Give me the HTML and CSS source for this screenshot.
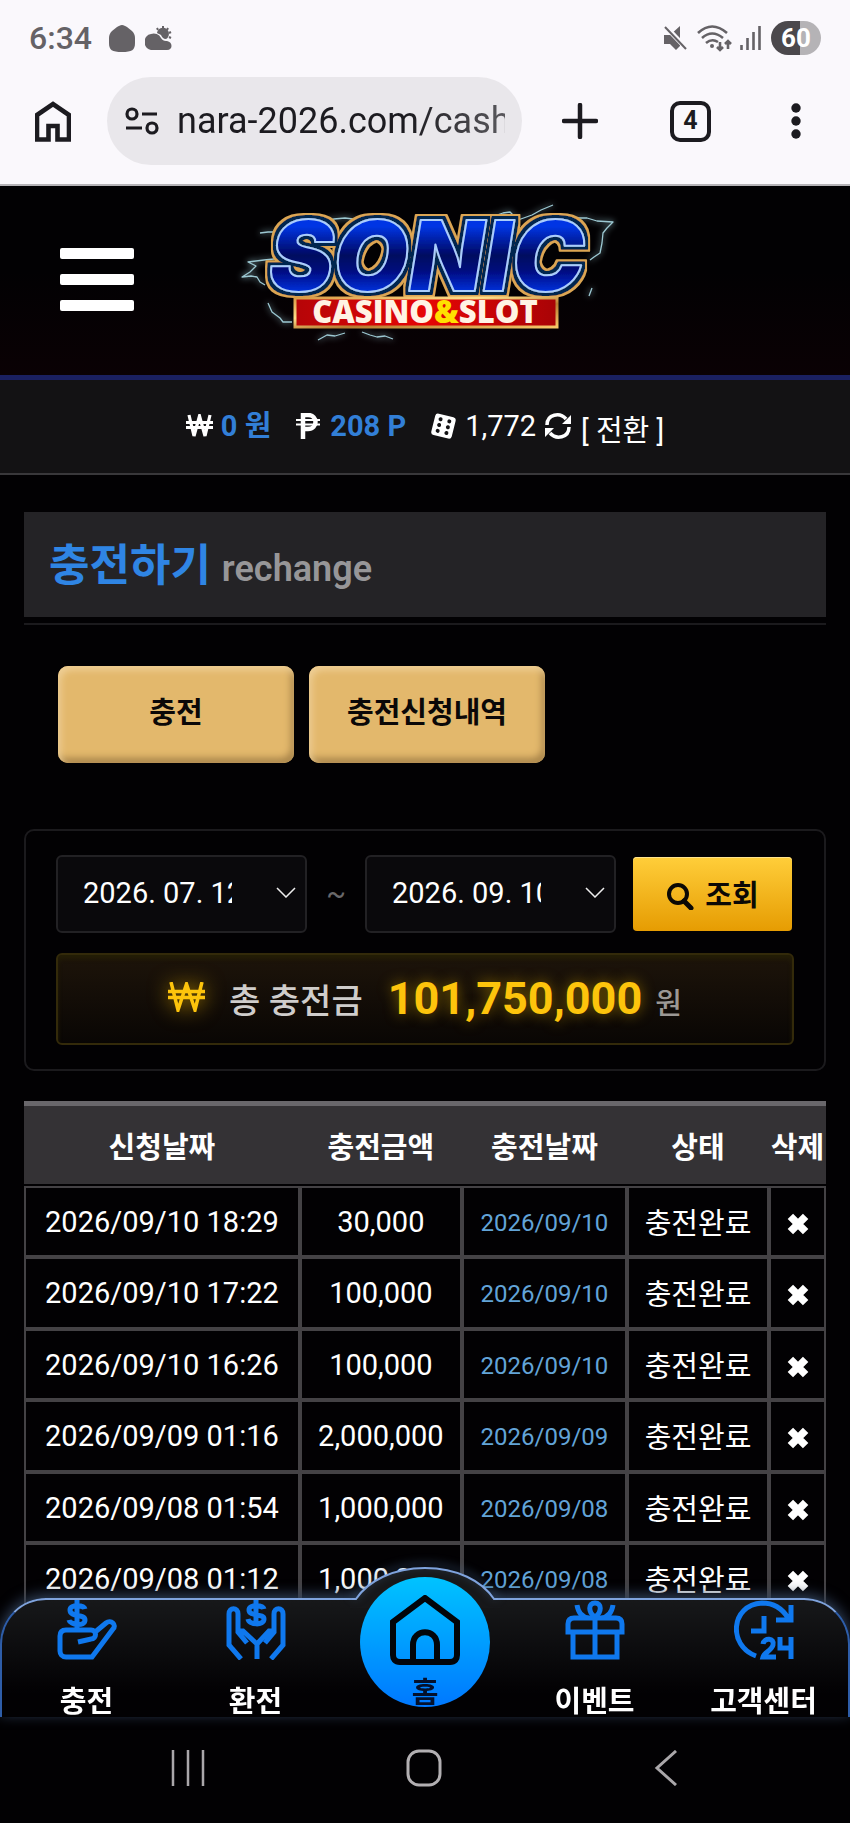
FILE: index.html
```html
<!DOCTYPE html>
<html lang="ko">
<head>
  <meta charset="UTF-8">
  <meta name="viewport" content="width=device-width, initial-scale=1">
  <title>충전하기</title>
  <link rel="stylesheet" href="styles.css">
</head>
<body>

  <div class="browser">
    <div class="status">
      <span class="clock">6:34</span>
      <svg width="26" height="27" viewBox="0 0 26 27"><path d="M13 0c2 0 3 1 5 2l5 4c2 2 3 4 3 7v5c0 7-3 9-13 9S0 25 0 18v-5c0-3 1-5 3-7l5-4c2-1 3-2 5-2z" fill="#656266"/></svg>
      <svg class="weather" width="27" height="24" viewBox="0 0 27 24"><g fill="#656266"><path d="M7 24a7 8 0 0 1-1-16 8 8 0 0 1 10 4 6 6 0 0 0 6 3c6 1 6 9 0 9z"/><path d="M12 7a6 6 0 1 1 9 6c-3 0-4-2-5-4-1-1-3-1-4-2z"/></g><path d="M18 0v2M12 2l1 2M23 2l-1 2M26 6l-2 1M26 12l-2-1" stroke="#656266" stroke-width="2"/></svg>
      <span class="space"></span>
      <svg width="24" height="24" viewBox="0 0 24 24"><path d="M1 9h6l10-9v20l-4 4-6-6H1z" fill="#656266"/><path d="M2 0l22 23" stroke="#faf8fc" stroke-width="5"/><path d="M2 1l21 22" stroke="#656266" stroke-width="2"/></svg>
      <svg class="wifi" width="36" height="27" viewBox="0 0 36 27"><g fill="none" stroke="#656266" stroke-width="2.6"><path d="M1 8q14-13 29 0M5 13q10-9 21 0M9 18q6-5 12-1M23 17v8M20 22l3 3 3-3M31 24v-8M28 19l3-3 3 3"/></g><circle cx="15" cy="21" r="2" fill="#656266"/></svg>
      <svg width="21" height="24" viewBox="0 0 21 24"><path d="M1.500 19v5M7.500 12v12M13.500 6v18M19.500 0v24" stroke="#656266" stroke-width="2.600"/></svg>
      <span class="battery">60</span>
    </div>
    <div class="toolbar">
      <button class="tool" aria-label="홈"><svg width="36" height="41" viewBox="0 0 36 41"><path d="M2 38.500V14L18 3l16 11v24.500H22.500V25h-9v13.500z" fill="none" stroke="#1c1b20" stroke-width="4.600"/></svg></button>
      <label class="address">
        <svg width="34" height="28" viewBox="0 0 34 28"><g fill="none" stroke="#1c1b20" stroke-width="3.200"><circle cx="7" cy="7" r="5"/><circle cx="27" cy="21" r="5"/><path d="M17 7h15M1 21h16"/></g></svg>
        <input type="text" value="nara-2026.com/cash" aria-label="주소">
      </label>
      <div class="tools">
        <button class="tool" aria-label="새 탭"><svg width="36" height="36" viewBox="0 0 36 36"><path d="M18 2v32M2 18h32" stroke="#1c1b20" stroke-width="4.500" stroke-linecap="round"/></svg></button>
        <button class="tool tabs">4</button>
        <button class="tool" aria-label="메뉴"><svg width="10" height="36" viewBox="0 0 10 36"><g fill="#1c1b20"><circle cx="5" cy="5" r="4.700"/><circle cx="5" cy="18" r="4.700"/><circle cx="5" cy="31" r="4.700"/></g></svg></button>
      </div>
    </div>
  </div>

  <header class="header">
    <button class="menu" aria-label="전체 메뉴"><span></span><span></span><span></span></button>
    <a class="logo" href="#" aria-label="SONIC CASINO&amp;SLOT">
      <svg width="390" height="160" viewBox="0 0 390 160">
        <defs>
          <linearGradient id="blue" x1="0" y1="0" x2="0" y2="1"><stop offset=".25" stop-color="#0436e4"/><stop offset=".5" stop-color="#030760"/><stop offset=".62" stop-color="#04087a"/><stop offset=".82" stop-color="#0534e0"/></linearGradient>
          <linearGradient id="gold" x1="0" y1="0" x2="1" y2="1"><stop offset="0" stop-color="#d99a45"/><stop offset=".35" stop-color="#ffe08a"/><stop offset=".6" stop-color="#b87a30"/><stop offset="1" stop-color="#f7c768"/></linearGradient>
          <linearGradient id="red" x1="0" y1="0" x2="1" y2="0"><stop offset="0" stop-color="#b50508"/><stop offset=".5" stop-color="#e60505"/><stop offset="1" stop-color="#a80306"/></linearGradient>
          <filter id="glow" x="-20%" y="-20%" width="140%" height="140%"><feGaussianBlur stdDeviation="3"/></filter>
          <filter id="outline" x="-10%" y="-10%" width="120%" height="120%">
            <feMorphology in="SourceAlpha" operator="dilate" radius="5" result="a"/>
            <feFlood flood-color="#dba552"/><feComposite in2="a" operator="in" result="outer"/>
            <feMorphology in="SourceAlpha" operator="dilate" radius="3" result="b"/>
            <feFlood flood-color="#06264f"/><feComposite in2="b" operator="in" result="inner"/>
            <feMerge><feMergeNode in="outer"/><feMergeNode in="inner"/><feMergeNode in="SourceGraphic"/></feMerge>
          </filter>
        </defs>
        <g id="bolts" fill="none" stroke="#9cc8d2" stroke-width="1.300" stroke-linejoin="round">
          <path d="M232 29l14-5 12-2 15-5 7-1 8 8 14-5 9-5 12-5M337 24l8-2 12 0 10 3 16 1-6 6-4 5-1 10-2 10-6 4-4 3M62 26l6-4M96 25l8-2 11-1 8 1 9 3M30 37l8-1 12 0M44 63l-10 1-16 2 8 4-6 6-8 5 9-1 6 1 3 5 5 3M38 107l4 9 8 6 3 4 9 0M88 144l9-5 8 1 10-3M132 136l8 3 7 2 8-1 8 3M362 92l-3 8"/>
        </g>
        <use href="#bolts" filter="url(#glow)"/>
        <text class="sonic" x="39" y="95" fill="url(#blue)" stroke="#a9cdfc" filter="url(#outline)">SONIC</text>
        <rect x="65" y="102" width="262" height="29" fill="url(#red)" stroke="url(#gold)" stroke-width="3"/>
        <text class="casino" x="195" y="127" text-anchor="middle" fill="#fff3e4">CASINO<tspan fill="#ffe000">&amp;</tspan>SLOT</text>
      </svg>
    </a>
  </header>

  <div class="wallet">
    <svg width="27" height="24" viewBox="0 0 27 24"><path d="M3 1l5 21 5.500-20L19 22l5-21M0 8.500h27M0 13.500h27" fill="none" stroke="#fff" stroke-width="3.200"/></svg>
    <b class="won">0 원</b>
    <svg width="24" height="26" viewBox="0 0 24 26"><path d="M7 26V2h5c10 0 10 14 0 14H7" fill="none" stroke="#fff" stroke-width="4.500"/><path d="M0 7h24M0 11.500h24" stroke="#fff" stroke-width="2"/></svg>
    <b class="point">208 P</b>
    <svg class="dice" width="27" height="26" viewBox="0 0 27 26"><g transform="rotate(14 13 13)"><rect x="3" y="2" width="21" height="22" rx="3" fill="#fff"/><g fill="#131214"><circle cx="9" cy="7" r="2"/><circle cx="9" cy="13" r="2"/><circle cx="9" cy="19" r="2"/><circle cx="18" cy="7" r="2"/><circle cx="18" cy="13" r="2"/><circle cx="18" cy="19" r="2"/></g></g></svg>
    <span>1,772</span>
    <svg width="26" height="26" viewBox="0 0 26 26"><path d="M2 12C2 1 15-1 21 6M24 14c0 11-13 13-19 6" fill="none" stroke="#fff" stroke-width="3.500"/><path d="M26 2v9h-9zM0 24v-9h9z" fill="#fff"/></svg>
    <a class="convert" href="#">[ 전환 ]</a>
  </div>

  <main class="content">
    <h1 class="title">충전하기 <small>rechange</small></h1>

    <div class="btns">
      <button class="gold-btn">충전</button>
      <button class="gold-btn">충전신청내역</button>
    </div>

    <section class="filter">
      <form class="filter-row">
        <label class="date">
          <input type="text" value="2026. 07. 12." aria-label="시작일">
          <svg width="20" height="11" viewBox="0 0 20 11"><path d="M1 1l9 9 9-9" fill="none" stroke="#eee" stroke-width="1.500"/></svg>
        </label>
        <span class="tilde">~</span>
        <label class="date">
          <input type="text" value="2026. 09. 10." aria-label="종료일">
          <svg width="20" height="11" viewBox="0 0 20 11"><path d="M1 1l9 9 9-9" fill="none" stroke="#eee" stroke-width="1.500"/></svg>
        </label>
        <button class="search" type="button"><svg width="28" height="28" viewBox="0 0 28 28"><circle cx="12" cy="12" r="9" fill="none" stroke="#0b0905" stroke-width="4"/><path d="M18 19l7 7" stroke="#0b0905" stroke-width="5" stroke-linecap="round"/></svg>조회</button>
      </form>
      <div class="total">
        <svg width="37" height="30" viewBox="0 0 37 30"><path d="M3 0l7 28 8.500-26L27 28l7-28M0 9.500h37M0 15.500h37" fill="none" stroke="#fdc40c" stroke-width="3.500"/></svg>
        <span class="total-label">총 충전금</span>
        <strong>101,750,000</strong>
        <span class="unit">원</span>
      </div>
    </section>

    <table class="list">
      <colgroup><col class="c1"><col class="c2"><col class="c3"><col class="c4"><col class="c5"></colgroup>
      <thead>
        <tr><th>신청날짜</th><th>충전금액</th><th>충전날짜</th><th>상태</th><th>삭제</th></tr>
      </thead>
      <tbody id="rows"></tbody>
    </table>
  </main>

  <div class="dock">
    <nav class="tabbar">
      <svg class="bump" width="150" height="44" viewBox="0 0 150 44">
        <path d="M0 36h5C17 17 42 4 75 4s58 13 70 32h5v8H0z" fill="#17181a"/>
        <path class="bump-line" d="M2 35h4C18 17 43 4 75 4s57 13 69 31h4" fill="none" stroke="#7fa3dd" stroke-width="2"/>
      </svg>
      <a href="#">
        <svg width="60" height="60" viewBox="0 0 60 60"><g fill="none" stroke="#0f78ee" stroke-width="5"><path d="M9 30h25c6 0 6 9 0 9l-13 3M37 33l12-10c5-4 11 2 7 6L35 57H9c-4 0-6-3-6-6V36c0-4 2-6 6-6"/><path d="M28 9c-1-4-15-5-15 1 0 8 15 3 15 10s-15 5-16 0M20 0v29"/></g></svg>
        <span>충전</span>
      </a>
      <a href="#">
        <svg width="60" height="60" viewBox="0 0 60 60"><g fill="none" stroke="#0f78ee" stroke-width="5"><path d="M15 59L3 45V14c0-7 9-7 9 0v18l9 11M45 59l12-14V14c0-7-9-7-9 0v18l-9 11M13 31h4l14 13v15M47 31h-4L31 44"/><path d="M38 9c-1-4-15-5-15 1 0 7 15 3 15 9 0 7-15 6-16 0M30 0v26"/></g></svg>
        <span>환전</span>
      </a>
      <a class="home" href="#">
        <svg width="70" height="70" viewBox="0 0 70 70"><path d="M3 27L35 3l32 24v33c0 4-2 7-7 7H10c-5 0-7-3-7-7zM23 67V50c0-17 24-17 24 0v17" fill="none" stroke="#02050a" stroke-width="6"/></svg>
        <span>홈</span>
      </a>
      <a href="#">
        <svg width="60" height="60" viewBox="0 0 60 60"><g fill="none" stroke="#0f78ee" stroke-width="5"><path d="M3 32v-8c0-4 2-6 6-6h42c4 0 6 2 6 6v8zM8 33v24h44V33M30 18v40M24 18c-8-1-11-6-12-13M36 18c8-1 11-6 12-13"/><path d="M30 17c-7-5-7-14 0-14s7 9 0 14z"/></g></svg>
        <span>이벤트</span>
      </a>
      <a href="#">
        <svg width="60" height="60" viewBox="0 0 60 60"><g fill="none" stroke="#0f78ee" stroke-width="5"><path d="M22 56C-6 46-4 5 28 3c12 0 20 5 26 15M57 5v15H42M30 16v15H17"/><path d="M29 44c1-7 12-6 10 1-1 5-9 8-10 12h13M46 37v11h11M57 37v22"/></g></svg>
        <span>고객센터</span>
      </a>
    </nav>
    <div class="sysbar">
      <button aria-label="최근 앱"><svg width="34" height="36" viewBox="0 0 34 36"><path d="M2 0v36M17 0v36M32 0v36" stroke="#aaa7aa" stroke-width="2.500"/></svg></button>
      <button aria-label="홈 화면"><svg width="36" height="38" viewBox="0 0 36 38"><rect x="2" y="2" width="32" height="34" rx="11" fill="none" stroke="#b2afb2" stroke-width="3"/></svg></button>
      <button aria-label="뒤로"><svg width="36" height="36" viewBox="0 0 36 36"><path d="M34 1L15 18l19 17" fill="none" stroke="#aaa7aa" stroke-width="3"/></svg></button>
    </div>
  </div>

  <script>
    const data = [
      ['2026/09/10 18:29', '30,000', '2026/09/10'],
      ['2026/09/10 17:22', '100,000', '2026/09/10'],
      ['2026/09/10 16:26', '100,000', '2026/09/10'],
      ['2026/09/09 01:16', '2,000,000', '2026/09/09'],
      ['2026/09/08 01:54', '1,000,000', '2026/09/08'],
      ['2026/09/08 01:12', '1,000,000', '2026/09/08']
    ];
    const cross = '<svg width="24" height="24" viewBox="0 0 22 22"><path d="M4 4l14 14M18 4L4 18" stroke="#fff" stroke-width="7"/></svg>';

    document.getElementById('rows').innerHTML = data.map(r =>
      `<tr><td>${r[0]}</td><td>${r[1]}</td><td class="done">${r[2]}</td><td class="state">충전완료</td><td><button class="del" aria-label="삭제">${cross}</button></td></tr>`
    ).join('');
  </script>
</body>
</html>
```
FILE: styles.css
```css
* { box-sizing: border-box; }
body { margin: 0; background: #020103; color: #fff; font-family: Roboto, "Noto Sans CJK KR", sans-serif; font-size: 29px; line-height: 40px; }
button { border: 0; padding: 0; background: none; color: inherit; font: inherit; cursor: pointer; }
a { color: inherit; text-decoration: none; }
svg { display: block; flex: none; }

/* browser chrome */
.browser { background: #faf8fc; color: #1c1b20; border-bottom: 2px solid #b5b3b7; }
.status { display: flex; align-items: center; gap: 10px; height: 76px; padding: 0 29px; }
.clock { color: #656266; font-size: 32px; font-weight: 500; margin-right: 7px; }
.space { flex: 1; }
.battery { width: 50px; height: 34px; border-radius: 17px; background: linear-gradient(to right, #4b484c 59%, #b5b3b6 59%); color: #fff; font-size: 26px; font-weight: 700; line-height: 34px; text-align: center; }
.wifi { margin-right: -3px; }
.toolbar { display: flex; align-items: center; height: 108px; padding: 0 49px 18px 35px; }
.address { display: flex; align-items: center; gap: 18px; flex: 0 1 415px; min-width: 0; height: 88px; margin-left: 36px; padding: 0 17px 0 18px; border-radius: 44px; background: #e9e7eb; }
.address input { flex: 1; width: 0; min-width: 0; border: 0; padding: 0; background: none; color: #1c1b20; font: 36px/44px Roboto, sans-serif; mask-image: linear-gradient(to right, #000 70%, rgba(0, 0, 0, .7)); }
.tools { flex: 1; display: flex; justify-content: space-between; align-items: center; padding-left: 40px; }
.tabs { width: 41px; height: 41px; margin-right: 8px; border: 4px solid #1c1b20; border-radius: 10px; font-size: 25px; font-weight: 700; line-height: 32px; }

/* site header */
.header { display: flex; justify-content: center; position: relative; height: 194px; padding-top: 10px; background: linear-gradient(#020103 45%, #0a0104); border-bottom: 5px solid #1a2060; }
.menu { position: absolute; left: 60px; top: 62px; display: grid; gap: 15px; width: 74px; }
.menu span { height: 11px; border-radius: 2px; background: #fff; }
.sonic { font-family: Inter, sans-serif; font-size: 97px; font-weight: 900; font-style: italic; stroke-width: 2px; stroke-linejoin: round; }
.casino { font-family: "Open Sans", sans-serif; font-size: 31px; font-weight: 800; }

.wallet { display: flex; justify-content: center; align-items: center; height: 95px; padding-bottom: 1px; background: #131214; border-bottom: 2px solid #39383b; }
.wallet b { color: #327fd7; }
.won { margin: 0 25px 0 8px; }
.point { margin: 0 24px 0 10px; }
.dice { margin-right: 8px; }
.wallet span { margin-right: 9px; }
.convert { margin-left: 10px; padding-top: 9px; }

.content { padding: 37px 24px 207px; }
.title { margin: 0; height: 105px; padding: 0 25px; background: #242326; color: #2f85e4; font-size: 44px; line-height: 109px; box-shadow: 0 6px 0 #020103, 0 8px 0 #1b1a1d; }
.title small { color: #979698; font-size: 36px; font-weight: 600; }

.btns { display: flex; gap: 15px; padding: 49px 34px 66px; }
.gold-btn { width: 236px; height: 97px; padding-bottom: 3px; border-radius: 10px; background: #e3b86c; color: #0b0808; font-weight: 700; box-shadow: inset 3px 4px 7px #efcf96, inset -3px -5px 7px #a9854a; }

.filter { padding: 24px 30px; border: 2px solid #1b1a1d; border-radius: 10px; }
.filter-row { display: flex; align-items: center; }
.date { display: flex; align-items: center; justify-content: space-between; flex: 1 1 0; height: 78px; padding: 0 9px 3px 25px; border: 2px solid #222124; border-radius: 6px; background: #0a090c; }
.date input { width: 149px; border: 0; padding: 0; background: none; color: #fff; font: inherit; }
.tilde { width: 58px; color: #69686b; text-align: center; }
.search { display: flex; align-items: center; justify-content: center; gap: 11px; width: 159px; height: 74px; padding-top: 3px; margin: 0 2px 0 17px; border-radius: 4px; background: linear-gradient(#ffce3a, #e69c02); color: #0b0905; font-weight: 700; box-shadow: inset 0 1px 0 #ffe38c; }
.total { display: flex; align-items: center; justify-content: center; height: 92px; margin-top: 20px; border: 2px solid #332a0a; border-radius: 6px; background: linear-gradient(#1d140a, #090604); box-shadow: inset 0 4px 4px #241e06; }
.total svg { margin-bottom: 4px; filter: drop-shadow(0 0 10px #a67c00); }
.total-label { margin: 0 25px 0 24px; padding-top: 3px; color: #cfcdcb; font-size: 34px; font-weight: 500; }
.total strong { color: #fdc40c; font-size: 45px; text-shadow: 0 0 14px #8a6900; }
.unit { margin-left: 13px; padding-top: 9px; color: #9c9894; font-weight: 500; }

.list { width: 100%; margin-top: 30px; table-layout: fixed; border-collapse: separate; border-spacing: 0; text-align: center; }
.c1 { width: 34.4%; }
.c2 { width: 20.2%; }
.c3 { width: 20.6%; }
.c4 { width: 17.7%; }
.c5 { width: 7.1%; }
.list th { height: 85px; padding: 5px 0 0; border-top: 5px solid #69676b; border-bottom: 2px solid #020103; background: #343235; font-weight: 700; white-space: nowrap; }
.list td { height: 71px; padding: 0; border: 2px solid #444245; white-space: nowrap; }
.list tr:nth-child(even) td { height: 72px; }
.list .done { padding-top: 2px; color: #62a4d8; font-size: 24px; }
.list .state { padding-top: 4px; }
.del { display: inline-block; vertical-align: middle; }

/* bottom bars */
.dock { position: fixed; left: 0; right: 0; bottom: 0; background: linear-gradient(transparent 60px, #020103 60px); }
.tabbar { position: relative; display: flex; height: 119px; border: 2px solid #2e5da8; border-top-color: #7fa3dd; border-bottom: 0; border-radius: 46px 46px 0 0; background: linear-gradient(#17181a, #020103 80%); box-shadow: 0 -3px 14px #33455f; }
.bump { position: absolute; left: 50%; top: -36px; margin-left: -75px; overflow: visible; }
.bump-line { filter: drop-shadow(0 -3px 5px #48688f); }
.tabbar a { flex: 1; display: flex; flex-direction: column; align-items: center; justify-content: space-between; height: 122px; position: relative; font-weight: 700; white-space: nowrap; }
.tabbar .home { flex: none; width: 130px; height: 130px; margin: -23px 20px 0; padding-top: 18px; border-radius: 50%; background: linear-gradient(#00c3ff, #0078ff); color: #04112c; }
.home span { height: 34px; }
.sysbar { display: flex; justify-content: space-between; height: 106px; padding: 0 172px 4px 171px; background: #020103; }
```
